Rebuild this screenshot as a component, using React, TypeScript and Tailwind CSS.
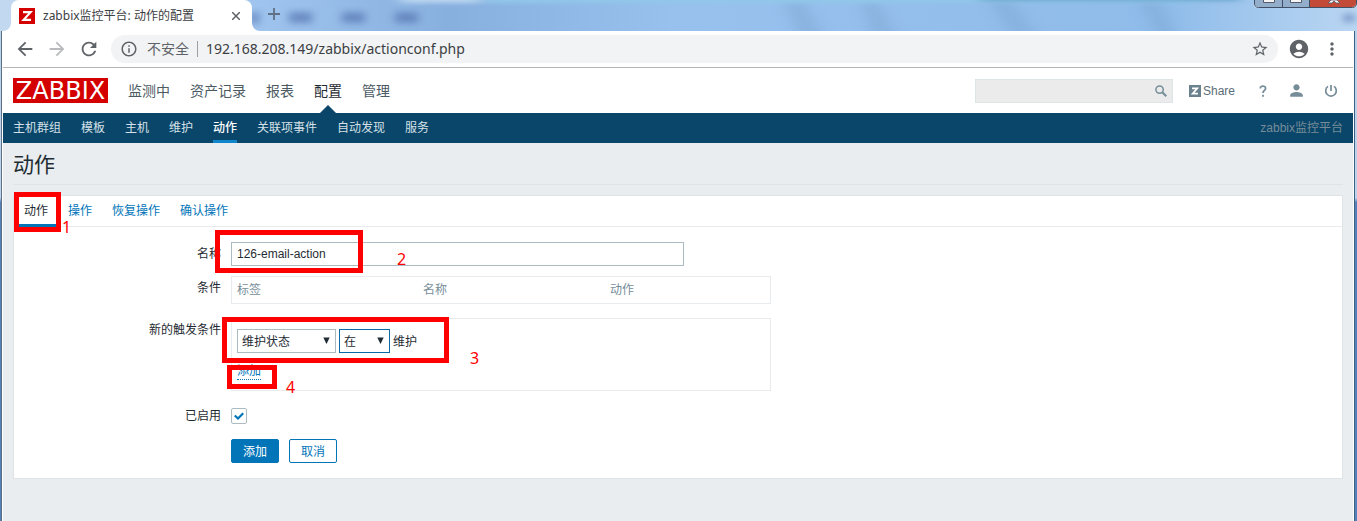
import React, { useState } from 'react';
import {
  MdAccountCircle,
  MdArrowBack,
  MdArrowForward,
  MdInfoOutline,
  MdMoreVert,
  MdPerson,
  MdRefresh,
  MdStarBorder,
} from 'react-icons/md';

const mainMenu = ['监测中', '资产记录', '报表', '配置', '管理'];
const subMenu = ['主机群组', '模板', '主机', '维护', '动作', '关联项事件', '自动发现', '服务'];
const tabs = ['动作', '操作', '恢复操作', '确认操作'];

function TitleBar() {
  return (
    <div className="relative flex h-[31px] overflow-hidden bg-[#93bdec] font-['Noto_Sans','Noto_Sans_CJK_SC',sans-serif]">
      <svg className="absolute inset-0 h-full w-full" viewBox="0 0 1357 31" preserveAspectRatio="none" aria-hidden="true">
        <defs>
          <linearGradient id="sky" x1="0" x2="1">
            <stop offset="0" stopColor="#c3d9f0" />
            <stop offset="0.19" stopColor="#9fc4ee" />
            <stop offset="0.33" stopColor="#88b0df" />
            <stop offset="0.5" stopColor="#98c1ee" />
            <stop offset="0.72" stopColor="#93bdeb" />
            <stop offset="0.86" stopColor="#8fbcea" />
            <stop offset="1" stopColor="#bad6f2" />
          </linearGradient>
          <filter id="soft" x="-20%" y="-50%" width="140%" height="200%">
            <feGaussianBlur stdDeviation="4 3" />
          </filter>
          <filter id="softer" x="-20%" y="-50%" width="140%" height="200%">
            <feGaussianBlur stdDeviation="7 2" />
          </filter>
        </defs>
        <rect width="1357" height="31" fill="url(#sky)" />
        <g filter="url(#softer)">
          <rect x="400" y="-5" width="80" height="8" fill="#b9d6ef" />
          <rect x="485" y="-6" width="720" height="9" fill="#91c7e9" />
          <rect x="980" y="-7" width="260" height="8" fill="#6aa6cd" />
          <path d="M785 3h20l22 38h-27zM862 3h16l22 38h-27zM990 3h25l25 38h-25zM1140 3h20l20 38h-20z" fill="#7fa8d4" opacity="0.5" />
        </g>
        <path
          d="M250 12h9v12h-9zM289 12h23v11h-23zM342 12h23v11h-23zM395 12h23v11h-23zM1344 14h10v8h-10z"
          fill="#5878b4"
          opacity="0.7"
          filter="url(#soft)"
        />
      </svg>
      <div className="relative ml-[11px] flex h-full w-[241px] items-center rounded-t-lg bg-white pl-2 pr-2">
        <svg className="absolute -left-2 bottom-0 h-2 w-2" viewBox="0 0 8 8" aria-hidden="true">
          <path d="M8 0v8H0a8 8 0 0 0 8-8" fill="#fff" />
        </svg>
        <svg className="absolute -right-2 bottom-0 h-2 w-2" viewBox="0 0 8 8" aria-hidden="true">
          <path d="M0 0v8h8a8 8 0 0 1-8-8" fill="#fff" />
        </svg>
        <svg className="h-4 w-4" viewBox="0 0 16 16" aria-hidden="true">
          <path d="M0 0h16v16H0z" fill="#d40000" />
          <path d="M4 4.2h7.6L4.6 11.8H12" fill="none" stroke="#fff" strokeWidth="2.2" />
        </svg>
        <span className="ml-2 flex-1 text-xs text-[#3c4043]">zabbix监控平台: 动作的配置</span>
        <button aria-label="关闭标签页" className="flex h-4 w-4 items-center justify-center text-[#5f6368]">
          <svg className="h-2 w-2" viewBox="0 0 8 8" aria-hidden="true">
            <path d="M0 0l8 8M8 0l-8 8" stroke="currentColor" strokeWidth="1.5" />
          </svg>
        </button>
      </div>
      <button aria-label="新标签页" className="relative ml-4 flex h-7 w-3 items-center text-[#5f6f85]">
        <svg className="h-3 w-3" viewBox="0 0 12 12" aria-hidden="true">
          <path d="M6 0v12M0 6h12" stroke="currentColor" strokeWidth="1.8" />
        </svg>
      </button>
      <div className="relative ml-auto h-2 w-[103px]">
        <svg className="h-full w-full" viewBox="0 0 103 8" aria-hidden="true">
          <path d="M0 0h103v4q0 4-4 4H4q-4 0-4-4z" fill="#e2eefa" />
          <path d="M1 0h27v7H5q-4 0-4-4z" fill="#93aecb" />
          <path d="M29 0h26v7H29z" fill="#93aecb" />
          <path d="M56 0h46v3q0 4-4 4H56z" fill="#c24a37" />
          <path d="M0.500 0v3q0 4.500 4 4.500h94q4 0 4-4.500V0M28.500 0v7M55.500 0v7" fill="none" stroke="#3f4f66" />
          <path d="M9.500 0v2.500h11V0M36.500 0v2.500h11V0" fill="#f4f4f4" stroke="#555c6b" />
          <path d="M77 0l-3 3h4l2-2 2 2h4l-3-3z" fill="#f4f4f4" stroke="#555c6b" strokeWidth="0.800" />
        </svg>
      </div>
    </div>
  );
}

function AddressBar() {
  return (
    <div className="flex h-[37px] items-center border-b border-[#b4b6b8] bg-white px-[11px] font-['Noto_Sans','Noto_Sans_CJK_SC',sans-serif] text-[#5f6368]">
      <button aria-label="后退"><MdArrowBack size={22} /></button>
      <button aria-label="前进" className="ml-[10px] text-[#b8babd]"><MdArrowForward size={22} /></button>
      <button aria-label="重新加载" className="ml-[10px]"><MdRefresh size={22} /></button>
      <div className="ml-[11px] flex h-7 flex-1 items-center rounded-full bg-[#f1f3f4] px-[9px]">
        <MdInfoOutline size={18} />
        <span className="ml-[9px] text-sm">不安全</span>
        <span className="ml-2 h-4 w-px bg-[#9aa0a6]" />
        <input
          aria-label="地址"
          className="ml-2 min-w-0 flex-1 bg-transparent text-sm text-[#3c4043] outline-none"
          defaultValue="192.168.208.149/zabbix/actionconf.php"
        />
        <button aria-label="收藏"><MdStarBorder size={18} /></button>
      </div>
      <button aria-label="用户" className="ml-[10px]"><MdAccountCircle size={22} /></button>
      <button aria-label="菜单" className="ml-3"><MdMoreVert size={20} /></button>
    </div>
  );
}

function Header() {
  return (
    <header className="flex h-[45px] items-center bg-white px-[10px]">
      <a href="#" className="flex h-[25px] w-[95px] items-center justify-center bg-[#d40000] font-['DejaVu_Sans',sans-serif] text-2xl leading-none text-white">
        ZABBIX
      </a>
      <nav className="ml-5 flex h-full gap-5 text-sm text-[#4c5a63]">
        {mainMenu.map((item) => (
          <a key={item} href="#" className={item === '配置' ? 'relative flex items-center text-[#1f2c33]' : 'flex items-center'}>
            {item}
            {item === '配置' && (
              <svg className="absolute bottom-0 left-[6px] h-2 w-4" viewBox="0 0 16 8" aria-hidden="true">
                <path d="M0 8l8-8 8 8z" fill="#0a466a" />
              </svg>
            )}
          </a>
        ))}
      </nav>
      <div className="ml-auto flex items-center text-[#768d99]">
        <div className="flex h-6 w-[198px] items-center border border-[#dfe4e7] bg-[#ebebeb] pr-[5px]">
          <input aria-label="搜索" className="min-w-0 flex-1 bg-transparent px-1 text-xs outline-none" />
          <button aria-label="搜索">
            <svg className="h-3 w-3" viewBox="0 0 12 12" fill="none" stroke="currentColor" aria-hidden="true">
              <circle cx="4.600" cy="4.600" r="3.700" strokeWidth="1.500" />
              <path d="M7.300 7.300l4 4" strokeWidth="2" />
            </svg>
          </button>
        </div>
        <a href="#" className="ml-4 flex items-center gap-[2px] text-xs">
          <svg className="h-3 w-3" viewBox="0 0 12 12" aria-hidden="true">
            <path d="M0 0h12v12H0z" fill="#6b818d" />
            <path d="M3 3.300h5.300L3.600 8.700H9" fill="none" stroke="#fff" strokeWidth="1.700" />
          </svg>
          <span className="text-[#5b6d77]">Share</span>
        </a>
        <a href="#" aria-label="帮助" className="ml-6">
          <svg className="h-3 w-2" viewBox="0 0 8 12" fill="none" stroke="currentColor" strokeWidth="1.800" aria-hidden="true">
            <path d="M1.300 3.500C1.300 0.200 6.600 0.300 6.600 3.400 6.600 5.400 4 5.400 4 8" />
            <path d="M4 9.800v2" />
          </svg>
        </a>
        <a href="#" aria-label="用户资料" className="ml-5"><MdPerson size={19} /></a>
        <a href="#" aria-label="退出" className="ml-[18px] mr-[5px]">
          <svg className="h-[14px] w-[14px]" viewBox="0 0 14 14" fill="none" stroke="currentColor" strokeWidth="1.700" aria-hidden="true">
            <path d="M7 1v6M4 2.400a5.300 5.300 0 1 0 6 0" />
          </svg>
        </a>
      </div>
    </header>
  );
}

function SubNav() {
  return (
    <nav className="flex h-[30px] gap-5 bg-[#0a466a] px-[10px] text-xs text-[#d5e1e8]">
      {subMenu.map((item) => (
        <a
          key={item}
          href="#"
          className={
            item === '动作'
              ? 'flex items-center border-y-3 border-t-transparent border-b-[#0f85cc] font-medium text-white'
              : 'flex items-center'
          }
        >
          {item}
        </a>
      ))}
      <span className="ml-auto flex items-center text-[#768d99]">zabbix监控平台</span>
    </nav>
  );
}

function Caret() {
  return (
    <svg className="pointer-events-none absolute right-[6px] top-2 h-[7px] w-[7px]" viewBox="0 0 7 7" aria-hidden="true">
      <path d="M0.300 0.500h6.400L3.500 7z" fill="#1f2c33" />
    </svg>
  );
}

// Hand-placed callouts that point the reader at each step of the form.
function Callouts() {
  return (
    <div className="pointer-events-none absolute inset-0 font-['Noto_Sans',sans-serif] text-base leading-4 text-[#ff0000]">
      <div className="absolute left-0 -top-1 h-10 w-[47px] border-5 border-[#ff0000]" />
      <span className="absolute left-12 top-[23px]">1</span>
      <div className="absolute left-[201px] top-[34px] h-[43px] w-[148px] border-5 border-[#ff0000]" />
      <span className="absolute left-[383px] top-[55px]">2</span>
      <div className="absolute left-[208px] top-[121px] h-[46px] w-[227px] border-5 border-[#ff0000]" />
      <span className="absolute left-[456px] top-[154px]">3</span>
      <div className="absolute left-[213px] top-[169px] h-6 w-[50px] border-5 border-[#ff0000]" />
      <span className="absolute left-[272px] top-[183px]">4</span>
    </div>
  );
}

function ActionForm() {
  const [enabled, setEnabled] = useState(true);
  const label = 'w-[207px] shrink-0 text-right leading-6';
  return (
    <form className="flex flex-col pb-[15px] pt-[15px]" onSubmit={(e) => e.preventDefault()}>
      <div className="flex gap-[10px]">
        <label htmlFor="name" className={label}>名称</label>
        <input id="name" defaultValue="126-email-action" className="h-6 w-[453px] border border-[#acbbc2] px-[5px] outline-none" />
      </div>
      <div className="mt-[10px] flex gap-[10px]">
        <span className={label}>条件</span>
        <div className="w-[540px] border border-[#e8ebed] px-[5px]">
          <table className="w-full table-fixed text-left text-[#768d99]">
            <thead>
              <tr className="h-[26px]">
                <th className="w-[186px] font-normal">标签</th>
                <th className="w-[187px] font-normal">名称</th>
                <th className="font-normal">动作</th>
              </tr>
            </thead>
          </table>
        </div>
      </div>
      <div className="mt-[14px] flex gap-[10px]">
        <span className={label}>新的触发条件</span>
        <div className="h-[73px] w-[540px] border border-[#e8ebed] px-[5px] pt-[10px]">
          <div className="flex items-center gap-[3px]">
            <div className="relative">
              <select aria-label="条件类型" className="block h-6 w-[99px] appearance-none border border-[#acbbc2] bg-white px-1 pt-[2px] outline-none">
                <option>维护状态</option>
              </select>
              <Caret />
            </div>
            <div className="relative">
              <select aria-label="运算符" className="block h-6 w-[51px] appearance-none border border-[#0a6aa6] bg-white px-1 pt-[2px] outline-none">
                <option>在</option>
              </select>
              <Caret />
            </div>
            <span className="pt-[2px]">维护</span>
          </div>
          <button type="button" className="mt-[10px] border-b border-dotted border-[#0275b8] leading-4 text-[#0275b8]">添加</button>
        </div>
      </div>
      <div className="mt-[13px] flex items-center gap-[10px]">
        <label htmlFor="enabled" className={label}>已启用</label>
        <div className="relative h-4 w-4">
          <input
            id="enabled"
            type="checkbox"
            checked={enabled}
            onChange={(e) => setEnabled(e.target.checked)}
            className="block h-4 w-4 appearance-none rounded-xs border border-[#acbbc2] bg-white"
          />
          {enabled && (
            <svg className="pointer-events-none absolute left-[3px] top-1 h-2 w-[10px]" viewBox="0 0 10 8" fill="none" aria-hidden="true">
              <path d="M0.800 3.500L4 6.500 9.200 1.300" stroke="#0275b8" strokeWidth="2.200" />
            </svg>
          )}
        </div>
      </div>
      <div className="ml-[217px] mt-[11px] flex gap-[10px]">
        <button type="submit" className="h-6 w-12 rounded-xs border border-[#0275b8] bg-[#0275b8] pt-[2px] text-white">添加</button>
        <button type="button" className="h-6 w-12 rounded-xs border border-[#0275b8] bg-white pt-[2px] text-[#0275b8]">取消</button>
      </div>
    </form>
  );
}

export default function App() {
  return (
    <div className="flex min-h-screen flex-col">
      <TitleBar />
      <div className="flex flex-1 bg-linear-to-b from-[#b9d1ea] from-0% via-[#bfd4ec] via-34% to-[#5580b8] to-35%">
        <div className="w-[3px] border-r border-white">
          <div className="ml-auto h-full w-px bg-[#5d7186]" />
        </div>
        <div className="flex min-w-0 flex-1 flex-col bg-[#e9edf0] font-['Liberation_Sans','Noto_Sans_CJK_SC',sans-serif] text-xs text-[#1f2c33]">
          <AddressBar />
          <Header />
          <SubNav />
          <main className="px-[10px]">
            <h1 className="border-b border-[#dfe4e7] pb-[3px] pt-[6px] text-[21px] leading-8">动作</h1>
            <section className="relative mt-[10px] border border-[#dfe4e7] bg-white">
              <div className="flex h-[31px] border-b border-[#e8ebed]">
                {tabs.map((tab) => (
                  <a
                    key={tab}
                    href="#"
                    className={
                      tab === '动作'
                        ? '-mb-px flex items-center border-y-3 border-t-transparent border-b-[#0275b8] px-[10px] pb-px'
                        : 'flex items-center px-[10px] text-[#0275b8]'
                    }
                  >
                    {tab}
                  </a>
                ))}
              </div>
              <ActionForm />
              <Callouts />
            </section>
          </main>
        </div>
        <div className="w-1 border-l border-white">
          <div className="h-full w-px bg-[#3c5f86]" />
        </div>
      </div>
    </div>
  );
}
